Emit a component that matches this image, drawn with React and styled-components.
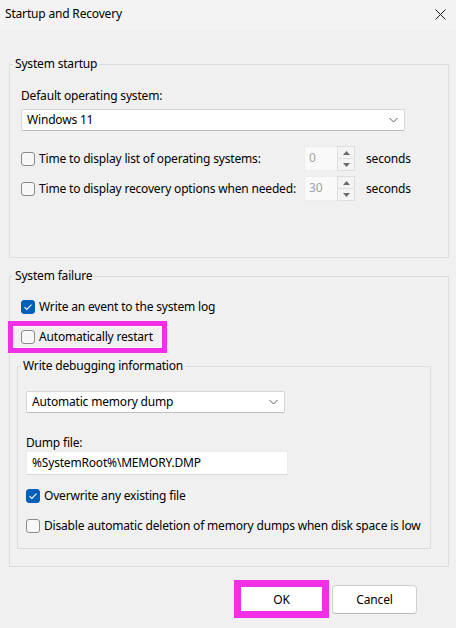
import React from 'react'
import styled, { createGlobalStyle } from 'styled-components'

const GlobalStyle = createGlobalStyle`
  html, body {
    margin: 0;
    padding: 0;
    background: #f0f0f0;
  }
  body {
    font-family: "Noto Sans", "Liberation Sans", sans-serif;
    font-size: 12px;
    letter-spacing: -0.18px;
    color: #000;
  }
`

const Window = styled.div`
  width: 456px;
  height: 628px;
  background: #f0f0f0;
  display: flex;
  flex-direction: column;
  overflow: hidden;
`

const TitleBar = styled.div`
  height: 30px;
  flex-shrink: 0;
  background: #f3f3f3;
  display: flex;
  align-items: center;
  justify-content: space-between;
  padding: 0 6px 2px 5px;
  box-sizing: border-box;
`

const TitleText = styled.span`
  font-size: 12px;
  line-height: 16px;
`

const CloseButton = styled.button`
  width: 20px;
  height: 20px;
  padding: 0;
  border: none;
  background: transparent;
  display: flex;
  align-items: center;
  justify-content: center;
`

const Content = styled.div`
  padding: 26px 7px 0 9px;
  display: flex;
  flex-direction: column;
`

const Group = styled.fieldset`
  margin: ${p => p.$inset ? '0 6px 0 -4px' : `${p.$mt || 0}px 0 0 0`};
  padding: 0;
  border: 1px solid #dcdcdc;
  min-width: 0;
`

const Legend = styled.legend`
  margin-left: 3px;
  padding: 0 2px;
  line-height: 16px;
  font-size: 12px;
`

const GroupBody = styled.div`
  display: flex;
  flex-direction: column;
  align-items: flex-start;
  padding: ${p => p.$pad};
`

const Label = styled.div`
  line-height: 16px;
  margin-top: ${p => p.$mt || 0}px;
`

const Select = styled.div`
  box-sizing: border-box;
  width: ${p => p.$w}px;
  height: 22px;
  margin-top: ${p => p.$mt || 0}px;
  background: #fff;
  border: 1px solid #d6d6d6;
  border-bottom-color: #bdbdbd;
  border-radius: 2px;
  display: flex;
  align-items: center;
  justify-content: space-between;
  padding: 0 6px 0 5px;
  line-height: 16px;
`

const TextInput = styled.div`
  box-sizing: border-box;
  width: ${p => p.$w}px;
  height: 24px;
  background: #fff;
  border: 1px solid #ececec;
  border-bottom-color: #d8d8d8;
  display: flex;
  align-items: center;
  padding: 0 5px;
  line-height: 16px;
`

const SpinRow = styled.div`
  display: flex;
  align-items: center;
  margin-top: ${p => p.$mt || 0}px;
`

const SpinLabel = styled.div`
  width: 283px;
  display: flex;
`

const Spinner = styled.div`
  width: 51px;
  height: 25px;
  display: flex;
  box-sizing: border-box;
`

const SpinField = styled.div`
  flex: 1;
  background: #f9f9f9;
  border: 1px solid #ededed;
  border-right: none;
  color: #a3a3a3;
  padding: 3px 0 0 4px;
  line-height: 16px;
`

const SpinButtons = styled.div`
  width: 18px;
  display: flex;
  flex-direction: column;
  border: 1px solid #dedede;
  box-sizing: border-box;
`

const SpinButton = styled.div`
  flex: 1;
  display: flex;
  align-items: center;
  justify-content: center;
  background: #f4f4f4;
  & + & {
    border-top: 1px solid #e2e2e2;
  }
`

const Unit = styled.span`
  margin-left: 11px;
  line-height: 16px;
`

const CheckRow = styled.label`
  display: inline-flex;
  align-items: center;
  gap: 4px;
  line-height: 16px;
  white-space: nowrap;
  margin-top: ${p => p.$mt || 0}px;
`

const Box = styled.span`
  box-sizing: border-box;
  width: 14px;
  height: 14px;
  border-radius: 3px;
  display: inline-flex;
  align-items: center;
  justify-content: center;
  flex-shrink: 0;
  background: ${p => p.$checked ? '#005fb8' : '#f7f7f7'};
  border: 1px solid ${p => p.$checked ? '#005fb8' : '#8b8b8b'};
`

const Highlight = styled.div`
  margin: 6px 0 0 -13px;
  border: 5px solid #f22ee6;
  padding: 3px 9px 3px 8px;
  box-shadow: inset 0 0 0 1px #f9f9f9;
  display: flex;
`

const InsetWrap = styled.div`
  align-self: stretch;
  margin-top: 5px;
  display: flex;
  flex-direction: column;
`

const ButtonRow = styled.div`
  display: flex;
  justify-content: flex-end;
  align-items: center;
  gap: 3px;
  padding: 13px 39px 0 0;
`

const ButtonMark = styled.div`
  border: 7px solid #f22ee6;
  display: flex;
`

const Button = styled.button`
  box-sizing: border-box;
  width: ${p => p.$w}px;
  height: ${p => p.$h}px;
  background: #fff;
  border: ${p => p.$plain ? 'none' : '1px solid #d0d0d0'};
  border-bottom-color: #bcbcbc;
  border-radius: ${p => p.$plain ? '0' : '4px'};
  font-family: inherit;
  font-size: 12px;
  letter-spacing: inherit;
  color: #000;
  padding: 0;
`

function Chevron() {
  return (
    <svg width="9" height="6" viewBox="0 0 9 6">
      <path d="M0.5 1 L4.5 5 L8.5 1" fill="none" stroke="#5c5c5c" strokeWidth="1" />
    </svg>
  )
}

function Tick() {
  return (
    <svg width="10" height="8" viewBox="0 0 10 8">
      <path d="M1.5 4.2 L3.8 6.4 L8.5 1.6" fill="none" stroke="#fff" strokeWidth="1.1" />
    </svg>
  )
}

function Triangle({ down }) {
  return (
    <svg width="7" height="4" viewBox="0 0 7 4">
      <path d={down ? 'M0 0 L7 0 L3.5 4 Z' : 'M0 4 L7 4 L3.5 0 Z'} fill="#6a6a6a" />
    </svg>
  )
}

function Check({ checked, children, mt }) {
  return (
    <CheckRow $mt={mt}>
      <Box $checked={checked}>{checked && <Tick />}</Box>
      {children}
    </CheckRow>
  )
}

function TimeoutRow({ label, value, mt }) {
  return (
    <SpinRow $mt={mt}>
      <SpinLabel>
        <Check>{label}</Check>
      </SpinLabel>
      <Spinner>
        <SpinField>{value}</SpinField>
        <SpinButtons>
          <SpinButton><Triangle /></SpinButton>
          <SpinButton><Triangle down /></SpinButton>
        </SpinButtons>
      </Spinner>
      <Unit>seconds</Unit>
    </SpinRow>
  )
}

export default function App() {
  return (
    <Window>
      <GlobalStyle />
      <TitleBar>
        <TitleText>Startup and Recovery</TitleText>
        <CloseButton aria-label="Close">
          <svg width="11" height="11" viewBox="0 0 11 11">
            <path d="M0.5 0.5 L10.5 10.5 M10.5 0.5 L0.5 10.5" stroke="#1a1a1a" strokeWidth="1" />
          </svg>
        </CloseButton>
      </TitleBar>

      <Content>
        <Group>
          <Legend>System startup</Legend>
          <GroupBody $pad="16px 11px 56px 11px">
            <Label>Default operating system:</Label>
            <Select $w={384} $mt={5}>
              <span>Windows 11</span>
              <Chevron />
            </Select>
            <TimeoutRow label="Time to display list of operating systems:" value="0" mt={15} />
            <TimeoutRow label="Time to display recovery options when needed:" value="30" mt={5} />
          </GroupBody>
        </Group>

        <Group $mt={10}>
          <Legend>System failure</Legend>
          <GroupBody $pad="15px 11px 17px 11px">
            <Check checked>Write an event to the system log</Check>
            <Highlight>
              <Check>Automatically restart</Check>
            </Highlight>
            <InsetWrap>
              <Group $inset>
                <Legend>Write debugging information</Legend>
                <GroupBody $pad="17px 8px 14px 8px">
                  <Select $w={259}>
                    <span>Automatic memory dump</span>
                    <Chevron />
                  </Select>
                  <Label $mt={22}>Dump file:</Label>
                  <TextInput $w={262}>%SystemRoot%\MEMORY.DMP</TextInput>
                  <Check checked mt={13}>Overwrite any existing file</Check>
                  <Check mt={14}>Disable automatic deletion of memory dumps when disk space is low</Check>
                </GroupBody>
              </Group>
            </InsetWrap>
          </GroupBody>
        </Group>
      </Content>

      <ButtonRow>
        <ButtonMark>
          <Button $w={81} $h={24} $plain>OK</Button>
        </ButtonMark>
        <Button $w={85} $h={29}>Cancel</Button>
      </ButtonRow>
    </Window>
  )
}
